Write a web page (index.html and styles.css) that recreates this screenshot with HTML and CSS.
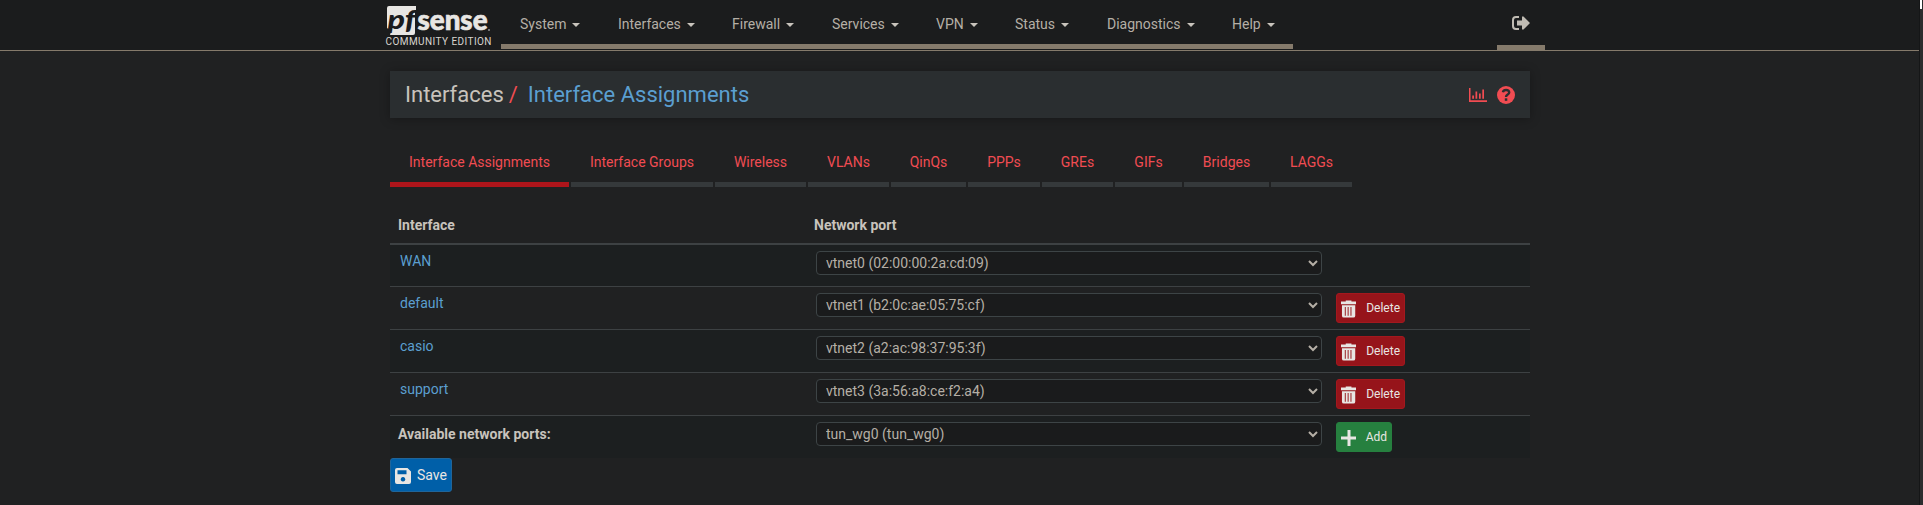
FILE: index.html
```html
<!DOCTYPE html>
<html lang="en">
<head>
<meta charset="utf-8">
<title>Interfaces: Interface Assignments</title>
<link rel="stylesheet" href="styles.css">
</head>
<body>
<svg class="defs" width="0" height="0">
  <symbol id="trash" viewBox="0 0 16 18"><path fill="currentColor" fill-rule="evenodd" d="M5 0h6v1h5v3H0V1h5zM1 5h14v11q0 2-2 2H3q-2 0-2-2zM4 7v9h1V7zM7 7v9h1V7zM10 7v9h1V7z"/></symbol>
</svg>
<div class="scroll"><div class="thumb"></div></div>
<header class="top">
  <a class="brand">
    <svg width="105" height="40" viewBox="0 0 105 40">
      <path class="light" d="M2 2q0-2 2-2h27v4h-1v23q0 2-2 2H5l2-7q-3 2-5 0z"/>
      <text class="pf" x="2.500" y="23" textLength="28" lengthAdjust="spacingAndGlyphs">pf</text>
      <text class="sense" x="32.500" y="24" textLength="70" lengthAdjust="spacingAndGlyphs">sense</text>
      <circle class="light" cx="104" cy="24" r=".8"/>
      <text class="edition" x=".5" y="39" textLength="106">COMMUNITY EDITION</text>
    </svg>
  </a>
  <nav class="menu">
    <a class="m1">System<i></i></a><a class="m2">Interfaces<i></i></a><a class="m3">Firewall<i></i></a><a class="m4">Services<i></i></a><a class="m5">VPN<i></i></a><a class="m6">Status<i></i></a><a class="m7">Diagnostics<i></i></a><a class="m8">Help<i></i></a>
  </nav>
  <a class="logout"><svg width="18" height="14" viewBox="0 0 18 14"><path fill="currentColor" d="M7 0v2H4Q2 2 2 4v6q0 2 2 2h3v2H4q-4 0-4-4V4q0-4 4-4zM5 4.500h5V.500l1.500 0L18 7l-6.500 6.500H10v-4H5z"/></svg></a>
</header>
<main class="container">
  <div class="crumbs">
    <span>Interfaces</span><span class="slash">/</span><a>Interface Assignments</a>
    <div class="tools">
      <svg width="18" height="14" viewBox="0 0 18 14"><path fill="currentColor" d="M0 0h1.500v12.300H18V14H0zM3.200 7.500H5v3.300H3.200zM6.500 3.500h1.700v7.300H6.500zM10 5.500h1.700v5.300H10zM13.300 1.500H15v9.300h-1.700z"/></svg>
      <svg width="18" height="18" viewBox="0 0 18 18"><circle cx="9" cy="9" r="9" fill="currentColor"/><path fill="none" class="q" d="M5.900 6.300C6.300 4.600 7.500 4 9 4c2 0 3.200 1.100 3.200 2.600C12.200 8.700 9 8.500 9 11"/><path class="qdot" d="M7.800 12.300h2.500v2.500H7.800z"/></svg>
    </div>
  </div>
  <nav class="tabs">
    <a class="t1 active">Interface Assignments</a><a class="t2">Interface Groups</a><a class="t3">Wireless</a><a class="t4">VLANs</a><a class="t5">QinQs</a><a class="t6">PPPs</a><a class="t7">GREs</a><a class="t8">GIFs</a><a class="t9">Bridges</a><a class="t10">LAGGs</a>
  </nav>
  <section class="table">
    <div class="row head"><b>Interface</b><b class="port">Network port</b></div>
    <div class="row first odd"><a>WAN</a><div><select><option>vtnet0 (02:00:00:2a:cd:09)</option></select></div></div>
    <div class="row"><a>default</a><div><select><option>vtnet1 (b2:0c:ae:05:75:cf)</option></select></div><button class="btn del"><svg width="16" height="18"><use href="#trash"/></svg>Delete</button></div>
    <div class="row odd"><a>casio</a><div><select><option>vtnet2 (a2:ac:98:37:95:3f)</option></select></div><button class="btn del"><svg width="16" height="18"><use href="#trash"/></svg>Delete</button></div>
    <div class="row"><a>support</a><div><select><option>vtnet3 (3a:56:a8:ce:f2:a4)</option></select></div><button class="btn del"><svg width="16" height="18"><use href="#trash"/></svg>Delete</button></div>
    <div class="row odd"><b class="avail">Available network ports:</b><div><select><option>tun_wg0 (tun_wg0)</option></select></div><button class="btn add"><svg width="16" height="16"><path fill="currentColor" d="M6.500 0h3v6.500H16v3H9.500V16h-3V9.500H0v-3h6.500z"/></svg>Add</button></div>
  </section>
  <button class="btn save"><svg width="16" height="16" viewBox="0 0 16 16"><path fill="currentColor" fill-rule="evenodd" d="M2 0h10.500L16 3.500V14q0 2-2 2H2q-2 0-2-2V2q0-2 2-2zM2.500 2.300v4h9v-4zM8 9a2.300 2.300 0 1 0 .01 0z"/></svg>Save</button>
</main>
</body>
</html>
```
FILE: styles.css
```css
* { box-sizing: border-box; }
body { margin: 0; height: 505px; overflow: hidden; background: #202122; color: #c8c3bc; font: 14px/20px Roboto, sans-serif; }
.defs { position: absolute; }
.scroll { position: absolute; right: 0; top: 0; width: 4px; height: 505px; background: #2b2d2e; border-left: 1px solid #151617; }
.thumb { height: 9px; width: 2px; background: #fff; }
.top { display: flex; width: 1920px; height: 51px; padding-left: 385px; background: #1b1c1d; border-bottom: 1px solid #857a6b; }
.brand { width: 116px; padding-top: 6px; }
.brand svg { display: block; overflow: visible; }
.light, .sense { fill: #e8e6e3; }
.pf { font: italic 900 27px Lato, sans-serif; fill: #1b1c1d; }
.sense { font: 900 28px Lato, sans-serif; stroke: #e8e6e3; stroke-width: .7; }
.edition { font: 10px Roboto, sans-serif; fill: #d8d4cf; }
.menu { display: flex; width: 792px; height: 49px; border-bottom: 5px solid #857a6b; }
.menu a { display: flex; padding: 14px 0 0 19px; color: #b5afa6; font-size: 14px; }
.menu i { width: 0; height: 0; margin: 9px 0 0 6px; border: 4px solid transparent; border-top-color: #c8c3bc; border-bottom: 0; }
.m1 { width: 98px; } .m2 { width: 114px; } .m3 { width: 100px; } .m4 { width: 104px; }
.m5 { width: 79px; } .m6 { width: 92px; } .m7 { width: 125px; } .m8 { width: 80px; }
.logout { width: 48px; height: 50px; margin-left: 204px; padding: 16px 0 0 15px; color: #c0bbb3; border-bottom: 5px solid #857a6b; }
.logout svg { display: block; }
.container { width: 1140px; margin-left: 390px; padding-top: 20px; }
.crumbs { display: flex; align-items: center; height: 47px; padding: 0 15px; background: #2a2e30; box-shadow: 0 1px 10px rgba(0,0,0,.3); font-size: 22px; }
.crumbs a { color: #5b9fd0; margin-left: 10px; }
.slash { color: #f14c52; margin-left: 5px; }
.tools { display: flex; gap: 10px; margin-left: auto; align-items: center; color: #f14c52; }
.q { stroke: #2a2e30; stroke-width: 2.400; }
.qdot { fill: #2a2e30; }
.tabs { display: flex; gap: 2px; height: 35px; margin-top: 34px; text-align: center; color: #f14c52; }
.tabs a { border-bottom: 5px solid #35393b; }
.tabs .active { border-color: #ae151b; }
.t1 { width: 179px; } .t2 { width: 142px; } .t3 { width: 91px; } .t4 { width: 81px; } .t5 { width: 75px; }
.t6 { width: 72px; } .t7 { width: 71px; } .t8 { width: 67px; } .t9 { width: 85px; } .t10 { width: 81px; }
.table { margin-top: 24px; }
.row { display: grid; grid-template-columns: 418px 520px auto; justify-content: start; align-items: start; height: 43px; padding: 6px 8px; border-top: 1px solid #3d4143; }
.head { height: 32px; border: 0; padding-top: 4px; }
.head .port { margin-left: -2px; }
.row.first { border-top-width: 2px; }
.row a { color: #5b9fd0; padding: 0 2px; }
.row .avail { padding-top: 2px; }
.odd { background: #1c1f20; }
select { display: block; width: 506px; height: 24px; padding: 0 5px; background-color: #1a1b1c; color: #b5afa6; border: 1px solid #3d4446; border-radius: 4px; font: 14px Roboto, sans-serif; }
.btn { display: flex; align-items: center; border: 1px solid; border-radius: 3px; color: #e8e6e3; font: 12px/18px Roboto, sans-serif; padding: 0 4px; height: 30px; gap: 10px; }
.btn svg { margin-top: 2px; }
.del { width: 69px; background: #96141a; border-color: #a3181e; }
.add { width: 56px; background: #26803f; border-color: #26803f; }
.save { width: 62px; height: 34px; gap: 6px; font-size: 14px; background: #005fa8; border-color: #20659a; }
```
